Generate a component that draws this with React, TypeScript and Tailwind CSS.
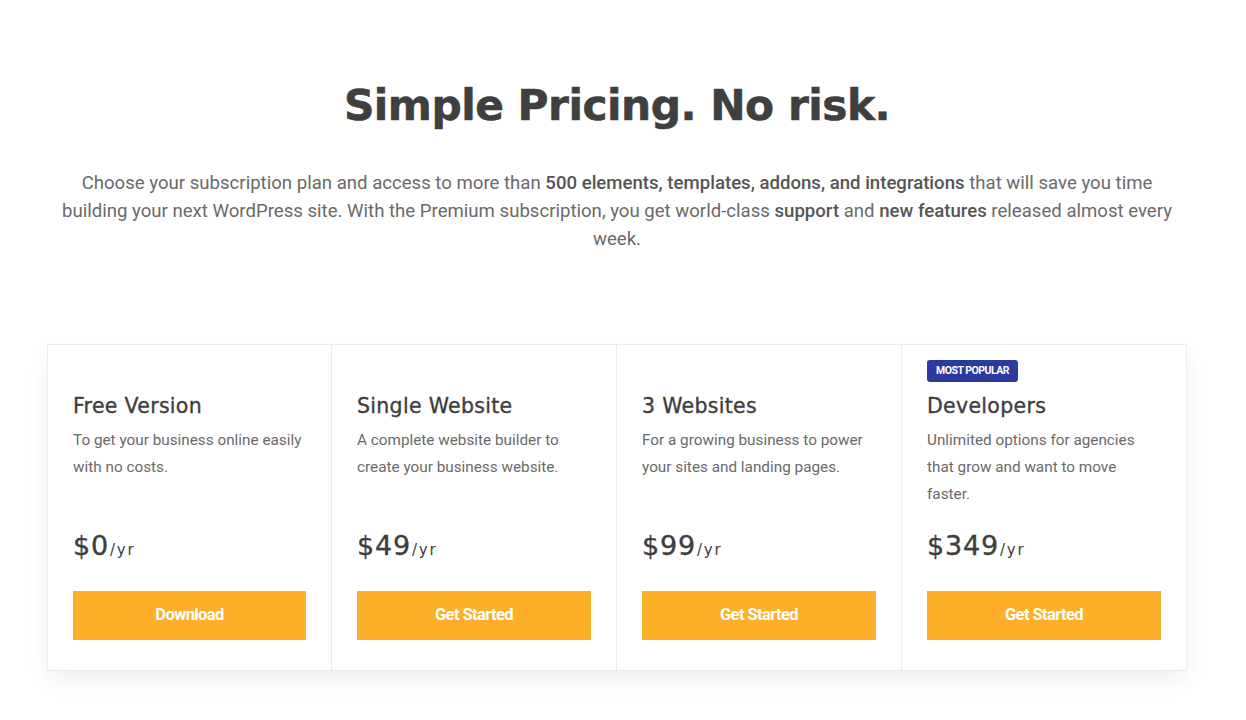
import React from "react";

const plans = [
  { name: "Free Version", desc: "To get your business online easily with no costs.", price: "$0", cta: "Download", popular: false },
  { name: "Single Website", desc: "A complete website builder to create your business website.", price: "$49", cta: "Get Started", popular: false },
  { name: "3 Websites", desc: "For a growing business to power your sites and landing pages.", price: "$99", cta: "Get Started", popular: false },
  { name: "Developers", desc: "Unlimited options for agencies that grow and want to move faster.", price: "$349", cta: "Get Started", popular: true },
];

export default function App() {
  return (
    <div className="min-h-[720px] w-full bg-white" style={{ fontFamily: "Roboto, 'Liberation Sans', sans-serif" }}>
      <div className="w-[1234px] flex flex-col items-center pt-[78px]">
        <h1
          className="text-[42.3px] leading-[56px] font-bold text-[#3f3f3f] tracking-[-0.5px] [-webkit-text-stroke:0.6px_#3f3f3f]"
          style={{ fontFamily: "'DejaVu Sans', sans-serif" }}
        >
          Simple Pricing. No risk.
        </h1>
        <p className="mt-[35px] w-[1120px] text-center text-[18.6px] leading-[28px] text-[#6a6a6a]">
          Choose your subscription plan and access to more than{" "}
          <span className="font-medium text-[#555]">500 elements, templates, addons, and integrations</span> that will save
          you time building your next WordPress site. With the Premium subscription, you get world-class{" "}
          <span className="font-medium text-[#555]">support</span> and{" "}
          <span className="font-medium text-[#555]">new features</span> released almost every week.
        </p>

        <div className="mt-[91px] w-[1140px] grid grid-cols-[283px_285px_285px_1fr] border border-[#ececec] bg-white shadow-[0_10px_22px_rgba(0,0,0,0.06)]">
          {plans.map((p, i) => (
            <div key={p.name} className={`flex flex-col px-[25px] pt-[15px] pb-[30px] ${i > 0 ? "border-l border-[#ececec]" : ""}`}>
              <div className="flex h-[22px] items-start">
                {p.popular && (
                  <span className="flex h-[22px] items-center rounded-[3px] bg-[#2b3a9f] px-[9px] text-[10.5px] font-bold text-white tracking-[-0.5px]">
                    MOST POPULAR
                  </span>
                )}
              </div>
              <h3
                className="mt-[10px] text-[20.5px] leading-[28px] text-[#3d3d3d] tracking-[0.3px] [-webkit-text-stroke:0.35px_#3d3d3d]"
                style={{ fontFamily: "'DejaVu Sans', sans-serif" }}
              >
                {p.name}
              </h3>
              <p className="mt-[7px] min-h-[81px] text-[15.3px] leading-[27px] text-[#6a6a6a]">{p.desc}</p>
              <div
                className="mt-[22px] flex items-baseline text-[#3d3d3d] [-webkit-text-stroke:0.35px_#3d3d3d]"
                style={{ fontFamily: "'DejaVu Sans', sans-serif" }}
              >
                <span className="text-[27px] leading-[32px] tracking-[0.8px]">{p.price}</span>
                <span className="ml-[1px] text-[15px] tracking-[1.8px] [-webkit-text-stroke:0px]">/yr</span>
              </div>
              <button className="mt-[29px] h-[49px] w-full bg-[#fdaf2a] text-[16.5px] font-bold text-white tracking-[-0.6px]">
                {p.cta}
              </button>
            </div>
          ))}
        </div>
      </div>
    </div>
  );
}
